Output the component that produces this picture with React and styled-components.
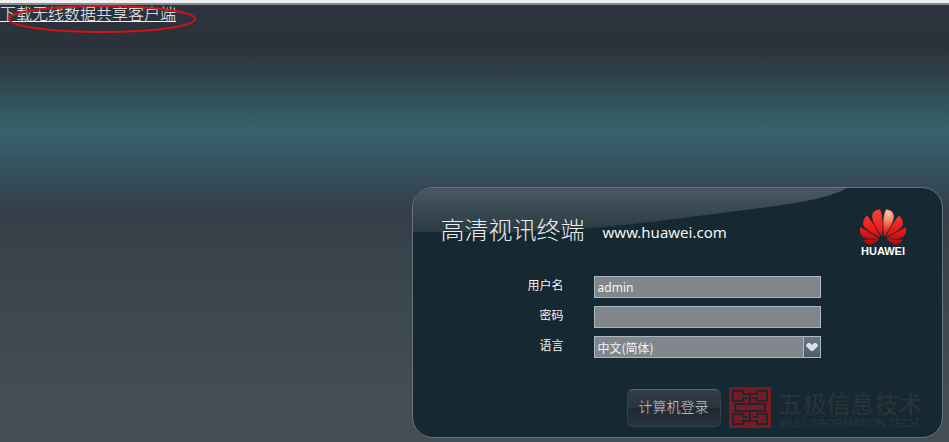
import React from 'react';
import styled, { createGlobalStyle } from 'styled-components';

const GlobalStyle = createGlobalStyle`
  * { box-sizing: border-box; }
  body {
    margin: 0;
    color: #fff;
    background: #454d56;
    font-family: "Noto Sans", "Noto Sans CJK SC", sans-serif;
  }
`;

const Page = styled.main`
  min-height: 100vh;
  display: flex;
  flex-direction: column;
  padding-bottom: 4px;
  border-top: 3px solid #eef0f1;
  box-shadow: inset 0 2px 0 #85898c;
  background: linear-gradient(
    #2b333c 0, #2b323b 44px, #2f424d 74px, #325259 98px, #365f69 122px,
    #37606d 134px, #345661 155px, #354b59 178px, #34464f 194px,
    #363f49 210px, #3b464e 290px, #434b54 370px, #454d56 440px
  );
`;

const TopBar = styled.nav`
  position: relative;
  height: 184px;
`;

const DownloadLink = styled.a`
  display: inline-block;
  color: #f4f6f7;
  font: 300 16px/20px "Noto Sans CJK SC", sans-serif;
  text-underline-offset: 1px;
  text-decoration-thickness: 1px;
`;

const Highlight = styled.svg`
  position: absolute;
  left: 8px;
  top: 2px;
  pointer-events: none;
`;

const Panel = styled.section`
  position: relative;
  width: 56%;
  min-width: 500px;
  margin: 0 6px 0 auto;
  padding-bottom: 8px;
  overflow: hidden;
  border: 1px solid #65747e;
  border-radius: 21px;
  background: #162831;
`;

const Gloss = styled.svg`
  position: absolute;
  left: 0;
  top: 0;
  width: 82%;
  height: 44px;
`;

const Header = styled.header`
  position: relative;
  display: flex;
  align-items: flex-start;
  height: 88px;
  padding: 21px 36px 0 28px;
`;

const Title = styled.h1`
  margin: 0 18px 0 0;
  color: #e8eeef;
  font: 300 24px/40px "Noto Sans CJK SC", sans-serif;
  white-space: nowrap;
`;

const Site = styled.span`
  flex: 1;
  color: #eff3f4;
  font: 15px/46px "Noto Sans", sans-serif;
`;

const Brand = styled.div`
  display: flex;
  flex-direction: column;
  align-items: center;
  font: bold 11px/12px "Liberation Sans", sans-serif;

  svg { display: block; }
`;

const Form = styled.form`
  position: relative;
`;

const Row = styled.div`
  display: grid;
  grid-template-columns: 151px 1fr;
  column-gap: 30px;
  height: 22px;
  margin-bottom: 8px;
  padding-right: 121px;
`;

const Label = styled.label`
  color: #f0f4f5;
  font: 12px/18px "Noto Sans CJK SC", sans-serif;
  text-align: right;
`;

const Field = styled.input`
  width: 100%;
  min-width: 0;
  height: 22px;
  padding: 0 3px;
  border: 1px solid #a9b8c2;
  border-radius: 0;
  outline: none;
  background: #80868a;
  color: #f3f5f6;
  font: 12px "Noto Sans", sans-serif;
`;

const SelectBox = styled.div`
  position: relative;
`;

const Select = styled(Field).attrs({ as: 'select' })`
  display: block;
  appearance: none;
  padding-right: 20px;
  background: #83868c;
  font-family: "Noto Sans CJK SC", sans-serif;
`;

const SelectArrow = styled.span`
  position: absolute;
  top: 1px;
  right: 1px;
  width: 17px;
  height: 20px;
  border-left: 1px solid #a9b8c2;
  background: linear-gradient(#697984, #4c5c68);
  pointer-events: none;

  svg { display: block; margin: 6px 2px; }
`;

const Actions = styled.div`
  display: flex;
  align-items: flex-start;
  gap: 8px;
  padding: 23px 15px 0 214px;
`;

const LoginButton = styled.button`
  flex: none;
  height: 38px;
  padding: 0 11px 4px;
  border: 1px solid #35414b;
  border-top-color: #59646e;
  border-radius: 6px;
  background: linear-gradient(#343e48, #2b343e 50%, #202831 50%, #29333d);
  color: #c6ccd2;
  font: 300 14px "Noto Sans CJK SC", sans-serif;
`;

const Seal = styled.svg`
  flex: none;
  margin-top: -2px;
`;

const Company = styled.div`
  flex: none;
  color: #2a343a;
  font: 24px/28px "Noto Sans CJK SC", sans-serif;
  white-space: nowrap;
`;

const CompanyLatin = styled.div`
  color: #2a383f;
  font: 11px/12px "Liberation Sans", sans-serif;
`;

const petals = [
  'M3.67 6.14S1.82 7.91 1.72 9.78v.35c.08 1.51 1.22 2.4 1.22 2.4 1.83 1.79 6.26 4.04 7.3 4.55 0 0 .06.03.1-.01l.02-.04v-.04C7.52 10.8 3.67 6.14 3.67 6.14z',
  'M9.65 18.6c-.02-.08-.1-.08-.1-.08l-7.38.26c.8 1.43 2.15 2.53 3.56 2.2.96-.25 3.16-1.78 3.88-2.3.06-.05.04-.09.04-.09z',
  'M9.73 17.97C6.49 15.78.21 12.28.21 12.28c-.15.46-.2.9-.21 1.3v.07c0 1.07.4 1.82.4 1.82.8 1.69 2.34 2.2 2.34 2.2.7.3 1.4.31 1.4.31.12.02 4.4 0 5.54 0 .05 0 .08-.05.08-.05z',
  'M9.06 3.19a3.42 3.42 0 00-2.57 3.15v.41c.03.6.16 1.05.16 1.05.66 2.9 3.86 7.65 4.55 8.65.05.05.1.03.1.03a.1.1 0 00.06-.1c1.06-10.6-1.11-13.42-1.11-13.42-.32.02-1.19.23-1.19.23z',
];

function Flower() {
  return (
    <svg width="46" height="36" viewBox="0 2.6 24 18.8" aria-hidden="true">
      <defs>
        <linearGradient id="petal" gradientUnits="userSpaceOnUse" x1="0" y1="3" x2="0" y2="21">
          <stop offset="0" stopColor="#f5463c" />
          <stop offset="0.55" stopColor="#ee1a1a" />
          <stop offset="1" stopColor="#b0090e" />
        </linearGradient>
        <radialGradient id="shine" gradientUnits="userSpaceOnUse" cx="9.5" cy="5" r="9">
          <stop offset="0" stopColor="#ffc49a" />
          <stop offset="0.5" stopColor="#f77a60" />
          <stop offset="1" stopColor="#e8231f" />
        </radialGradient>
      </defs>
      <g fill="url(#petal)" stroke="url(#petal)" strokeWidth="0.3">
        {petals.map((d) => <path key={d} d={d} />)}
      </g>
      <g fill="url(#petal)" stroke="url(#petal)" strokeWidth="0.3" transform="translate(24 0) scale(-1 1)">
        {petals.slice(0, 3).map((d) => <path key={d} d={d} />)}
        <path d={petals[3]} fill="url(#shine)" stroke="url(#shine)" />
      </g>
    </svg>
  );
}

function SealMark() {
  return (
    <Seal width="42" height="41" viewBox="0 0 42 41" aria-hidden="true">
      <rect width="42" height="41" fill="#7b1922" />
      <g fill="none" stroke="#182931" strokeWidth="2">
        <path d="M14 8V4H4v10h10v-3h4M28 8V4h10v10H28v-3h-4" />
        <path d="M14 33v4H4V27h10v3h4M28 33v4h10V27H28v3h-4" />
        <path d="M14 7H28M14 34H28M21 7V17M21 24V34" />
        <rect x="6" y="17" width="30" height="7" />
      </g>
    </Seal>
  );
}

export default function App() {
  return (
    <>
      <GlobalStyle />
      <Page>
        <TopBar>
          <DownloadLink href="#download">下载无线数据共享客户端</DownloadLink>
          <Highlight width="190" height="30" viewBox="0 0 190 30" aria-hidden="true">
            <ellipse cx="94" cy="14" rx="93" ry="13" fill="none" stroke="#d01519" strokeWidth="2" />
          </Highlight>
        </TopBar>
        <Panel>
          <Gloss viewBox="0 0 433 44" preserveAspectRatio="none" aria-hidden="true">
            <defs>
              <linearGradient id="gloss" x1="0" y1="0" x2="0" y2="1">
                <stop offset="0" stopColor="#495861" />
                <stop offset="1" stopColor="#2a3a43" />
              </linearGradient>
            </defs>
            <path d="M0 0H433C417 9 390 15 338 21C250 32 180 44 80 44H0Z" fill="url(#gloss)" />
          </Gloss>
          <Header>
            <Title>高清视讯终端</Title>
            <Site>www.huawei.com</Site>
            <Brand>
              <Flower />
              HUAWEI
            </Brand>
          </Header>
          <Form onSubmit={(e) => e.preventDefault()}>
            <Row>
              <Label htmlFor="user">用户名</Label>
              <Field id="user" type="text" defaultValue="admin" />
            </Row>
            <Row>
              <Label htmlFor="password">密码</Label>
              <Field id="password" type="password" />
            </Row>
            <Row>
              <Label htmlFor="language">语言</Label>
              <SelectBox>
                <Select id="language">
                  <option>中文(简体)</option>
                </Select>
                <SelectArrow>
                  <svg width="12" height="8" viewBox="0 0 12 8" aria-hidden="true">
                    <path d="M0 2L2 0H4L6 2L8 0H10L12 2V3L7 8H5L0 3Z" fill="#d8e1e8" />
                  </svg>
                </SelectArrow>
              </SelectBox>
            </Row>
            <Actions>
              <LoginButton type="submit">计算机登录</LoginButton>
              <SealMark />
              <Company>
                五极信息技术
                <CompanyLatin>WULI INFORMATION TECH</CompanyLatin>
              </Company>
            </Actions>
          </Form>
        </Panel>
      </Page>
    </>
  );
}
